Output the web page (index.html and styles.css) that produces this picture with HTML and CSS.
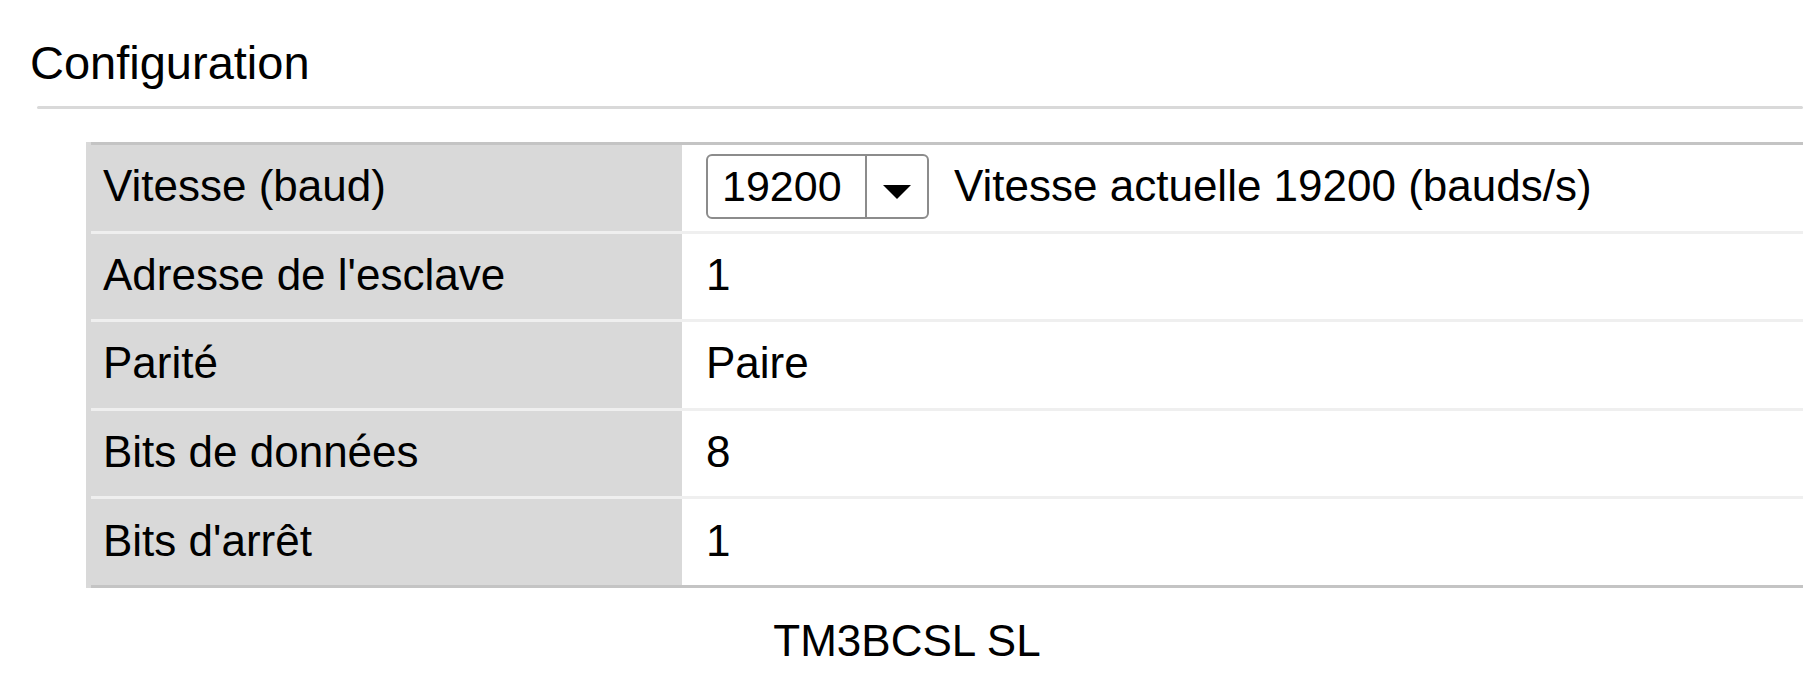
FILE: index.html
```html
<!DOCTYPE html>
<html lang="fr">
<head>
<meta charset="utf-8">
<title>Configuration</title>
<link rel="stylesheet" href="styles.css">
</head>
<body>
  <h1 class="title">Configuration</h1>
  <div class="rule"></div>
  <div class="config">
    <div class="row">
      <div class="label">Vitesse (baud)</div>
      <div class="value">
        <div class="select">
          <span class="select-text">19200</span>
          <span class="select-btn"><span class="caret"></span></span>
        </div>
        <span class="current">Vitesse actuelle 19200 (bauds/s)</span>
      </div>
    </div>
    <div class="row">
      <div class="label">Adresse de l'esclave</div>
      <div class="value">1</div>
    </div>
    <div class="row">
      <div class="label">Parité</div>
      <div class="value">Paire</div>
    </div>
    <div class="row">
      <div class="label">Bits de données</div>
      <div class="value">8</div>
    </div>
    <div class="row">
      <div class="label">Bits d'arrêt</div>
      <div class="value">1</div>
    </div>
  </div>
  <div class="caption">TM3BCSL SL</div>
</body>
</html>
```

FILE: styles.css
```css
html, body {
  margin: 0;
  padding: 0;
  background: #ffffff;
}

body {
  font-family: "Liberation Sans", Arial, sans-serif;
  color: #000000;
  font-size: 44px;
}

.title {
  margin: 35px 0 0 30px;
  font-size: 47px;
  font-weight: normal;
  line-height: normal;
}

.rule {
  margin: 16px 11px 0 37px;
  height: 3px;
  background: #d9d9d9;
  border-radius: 2px;
}

.config {
  margin: 33px 11px 0 86px;
  border-left: 5px solid #d9d9d9;
}

.row {
  display: grid;
  grid-template-columns: 591px 1fr;
  height: 85.6px;
  border-top: 3px solid #efefef;
}

.row:first-child {
  border-top-color: #c4c4c4;
}

.row:last-child {
  border-bottom: 3px solid #c4c4c4;
}

.label {
  background: #d9d9d9;
  padding: 0 12px 3px;
  display: flex;
  align-items: center;
}

.value {
  padding: 0 24px 3px;
  display: flex;
  align-items: center;
  background: #ffffff;
}

.select {
  display: flex;
  height: 65px;
  box-sizing: border-box;
  border: 2px solid #8c8c8c;
  border-radius: 6px;
}

.select-text {
  width: 159px;
  box-sizing: border-box;
  padding-left: 14px;
  border-right: 2px solid #8c8c8c;
  display: flex;
  align-items: center;
  font-size: 43px;
}

.select-btn {
  width: 60px;
  display: flex;
  align-items: center;
  justify-content: center;
}

.caret {
  width: 0;
  height: 0;
  border-left: 14px solid transparent;
  border-right: 14px solid transparent;
  border-top: 14px solid #000000;
  margin-top: 12px;
}

.current {
  margin-left: 25px;
}

.caption {
  margin-top: 28px;
  text-align: center;
  line-height: normal;
}
```
